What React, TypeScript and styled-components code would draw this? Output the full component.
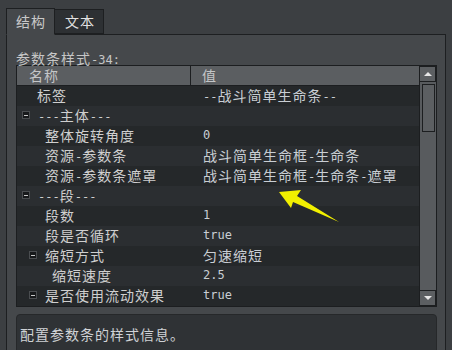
import * as React from 'react'
import styled, { createGlobalStyle } from 'styled-components'

const GlobalStyle = createGlobalStyle`
  body {
    margin: 0;
    background: #3c3f42;
    font-family: 'DejaVu Sans Mono', 'Noto Sans CJK SC', monospace;
  }
`

interface Row {
  name: string;
  value?: string;
  level: number;
  group?: boolean;
}

const rows: Row[] = [
  { name: '标签', value: '--战斗简单生命条--', level: 0 },
  { name: '---主体---', level: 0, group: true },
  { name: '整体旋转角度', value: '0', level: 1 },
  { name: '资源-参数条', value: '战斗简单生命框-生命条', level: 1 },
  { name: '资源-参数条遮罩', value: '战斗简单生命框-生命条-遮罩', level: 1 },
  { name: '---段---', level: 0, group: true },
  { name: '段数', value: '1', level: 1 },
  { name: '段是否循环', value: 'true', level: 1 },
  { name: '缩短方式', value: '匀速缩短', level: 1, group: true },
  { name: '缩短速度', value: '2.5', level: 2 },
  { name: '是否使用流动效果', value: 'true', level: 1, group: true },
]

const Screen = styled.div`
  position: relative;
  width: 452px;
  height: 350px;
  overflow: hidden;
  padding-top: 7px;
  box-sizing: border-box;
`

const TabBar = styled.div`
  display: flex;
  align-items: flex-end;
  padding-left: 6px;
  height: 27px;
  position: relative;
  z-index: 2;
`

const Tab = styled.div<{ active?: boolean }>`
  width: 49px;
  height: ${(p) => (p.active ? '27px' : '25px')};
  box-sizing: border-box;
  border: 1px solid #1d1f21;
  border-bottom: ${(p) => (p.active ? '1px solid #45484b' : '1px solid #1d1f21')};
  border-left: ${(p) => (p.active ? '1px solid #1d1f21' : 'none')};
  background: ${(p) => (p.active ? '#45484b' : '#2d3033')};
  color: ${(p) => (p.active ? '#c9c9c9' : '#e2e2e2')};
  display: flex;
  align-items: center;
  padding-left: ${(p) => (p.active ? '9px' : '10px')};
  margin-bottom: ${(p) => (p.active ? '-1px' : '0')};
`

const Panel = styled.div`
  margin: 0 6px 0 6px;
  height: 340px;
  box-sizing: border-box;
  border: 1px solid #1d1f21;
  background: #45484b;
  padding: 14px 8px 0 9px;
`

const Caption = styled.div`
  height: 16px;
  color: #c6c6c6;
`

const Tree = styled.div`
  display: flex;
  border: 1px solid #1c1e20;
  height: 242px;
  box-sizing: border-box;
`

const TreeBody = styled.div`
  flex: 1;
  display: flex;
  flex-direction: column;
  background: #25282a;
`

const Header = styled.div`
  display: grid;
  grid-template-columns: 173px 1fr;
  height: 20px;
  background: #5b5e61;
  border-bottom: 1px solid #1c1e20;
  box-sizing: border-box;
`

const HeaderCell = styled.div<{ divider?: boolean }>`
  display: flex;
  align-items: center;
  padding-left: ${(p) => (p.divider ? '11px' : '12px')};
  border-left: ${(p) => (p.divider ? '1px solid #1c1e20' : 'none')};
  color: #c4c6c8;
  height: 19px;
`

const RowLine = styled.div<{ light: boolean }>`
  display: grid;
  grid-template-columns: 174px 1fr;
  height: 20px;
  background: ${(p) => (p.light ? '#2b2e31' : '#25282a')};
`

const NameCell = styled.div<{ indent: number }>`
  position: relative;
  display: flex;
  align-items: center;
  padding-left: ${(p) => p.indent}px;
  color: #cfcfcf;
`

const ValueCell = styled.div`
  display: flex;
  align-items: center;
  padding-left: 12px;
  color: #c9ced4;
  white-space: nowrap;
`

const Toggle = styled.span`
  position: absolute;
  top: 5px;
  width: 8px;
  height: 8px;
  box-sizing: border-box;
  background: #17191b;
  border: 1px solid #4a4d50;
  display: flex;
  align-items: center;
  justify-content: center;

  &::after {
    content: '';
    width: 4px;
    height: 1px;
    background: #c8c8c8;
  }
`

const ScrollBar = styled.div`
  width: 17px;
  border-left: 1px solid #1c1e20;
  background: #585b5e;
  display: flex;
  flex-direction: column;
  box-sizing: border-box;
`

const ScrollButton = styled.div`
  height: 16px;
  box-sizing: border-box;
  border: 1px solid #1c1e20;
  border-left: none;
  background: #5c5f62;
  display: flex;
  align-items: center;
  justify-content: center;
`

const Track = styled.div`
  flex: 1;
  padding: 2px 1px 0 2px;
`

const Thumb = styled.div`
  height: 48px;
  box-sizing: border-box;
  border: 1px solid #1c1e20;
  background: #5c5f62;
`

const InfoBox = styled.div`
  margin-top: 7px;
  height: 60px;
  box-sizing: border-box;
  border: 1px solid #26282a;
  border-radius: 4px;
  background: #2f3235;
  padding: 10px 0 0 3px;
  color: #cfd2d6;
`

const TextLine = styled.span`
  display: inline-flex;
  align-items: baseline;
  height: 16px;
  white-space: nowrap;
`

const Cjk = styled.span`
  line-height: 15px;
  font-family: 'Noto Sans CJK SC', sans-serif;
  font-size: 14px;
  letter-spacing: 1px;
`

const Latin = styled.span`
  line-height: 15px;
  font-family: 'DejaVu Sans Mono', monospace;
  font-size: 12px;
  white-space: pre;
`

const Arrow = styled.svg`
  position: absolute;
  left: 0;
  top: 0;
  pointer-events: none;
`

const Text: React.FunctionComponent<{ children: string }> = ({ children }) => {
  const parts = children.match(/[\u3000-\u9fff\uff00-\uffef]+|[^\u3000-\u9fff\uff00-\uffef]+/g) || []
  return (
    <TextLine>
      {parts.map((part, i) =>
        /[\u3000-\u9fff\uff00-\uffef]/.test(part) ? <Cjk key={i}>{part}</Cjk> : <Latin key={i}>{part}</Latin>
      )}
    </TextLine>
  )
}

const Triangle = ({ down }: { down?: boolean }) => (
  <svg width="8" height="5" viewBox="0 0 8 5">
    <polygon points={down ? '0,0 8,0 4,4' : '4,0 8,4 0,4'} fill="#e6e6e6" />
  </svg>
)

const App = () => {
  return (
    <Screen>
      <GlobalStyle />
      <TabBar>
        <Tab active><Text>结构</Text></Tab>
        <Tab><Text>文本</Text></Tab>
      </TabBar>
      <Panel>
        <Caption><Text>参数条样式-34:</Text></Caption>
        <Tree>
          <TreeBody>
            <Header>
              <HeaderCell><Text>名称</Text></HeaderCell>
              <HeaderCell divider><Text>值</Text></HeaderCell>
            </Header>
            {rows.map((row, i) => {
              const indent = (row.level === 0 && !row.group ? 20 : 21) + row.level * 7
              return (
                <RowLine key={i} light={i % 2 === 1}>
                  <NameCell indent={indent}>
                    {row.group && <Toggle style={{ left: indent - 16 }} />}
                    <Text>{row.name}</Text>
                  </NameCell>
                  <ValueCell>{row.value && <Text>{row.value}</Text>}</ValueCell>
                </RowLine>
              )
            })}
          </TreeBody>
          <ScrollBar>
            <ScrollButton><Triangle /></ScrollButton>
            <Track><Thumb /></Track>
            <ScrollButton><Triangle down /></ScrollButton>
          </ScrollBar>
        </Tree>
        <InfoBox><Text>配置参数条的样式信息。</Text></InfoBox>
      </Panel>
      <Arrow width="452" height="350" viewBox="0 0 452 350">
        <polygon points="279,192 301,190 297,196 339,222 293,202 291,208" fill="#f2f000" />
      </Arrow>
    </Screen>
  )
}

export default App
